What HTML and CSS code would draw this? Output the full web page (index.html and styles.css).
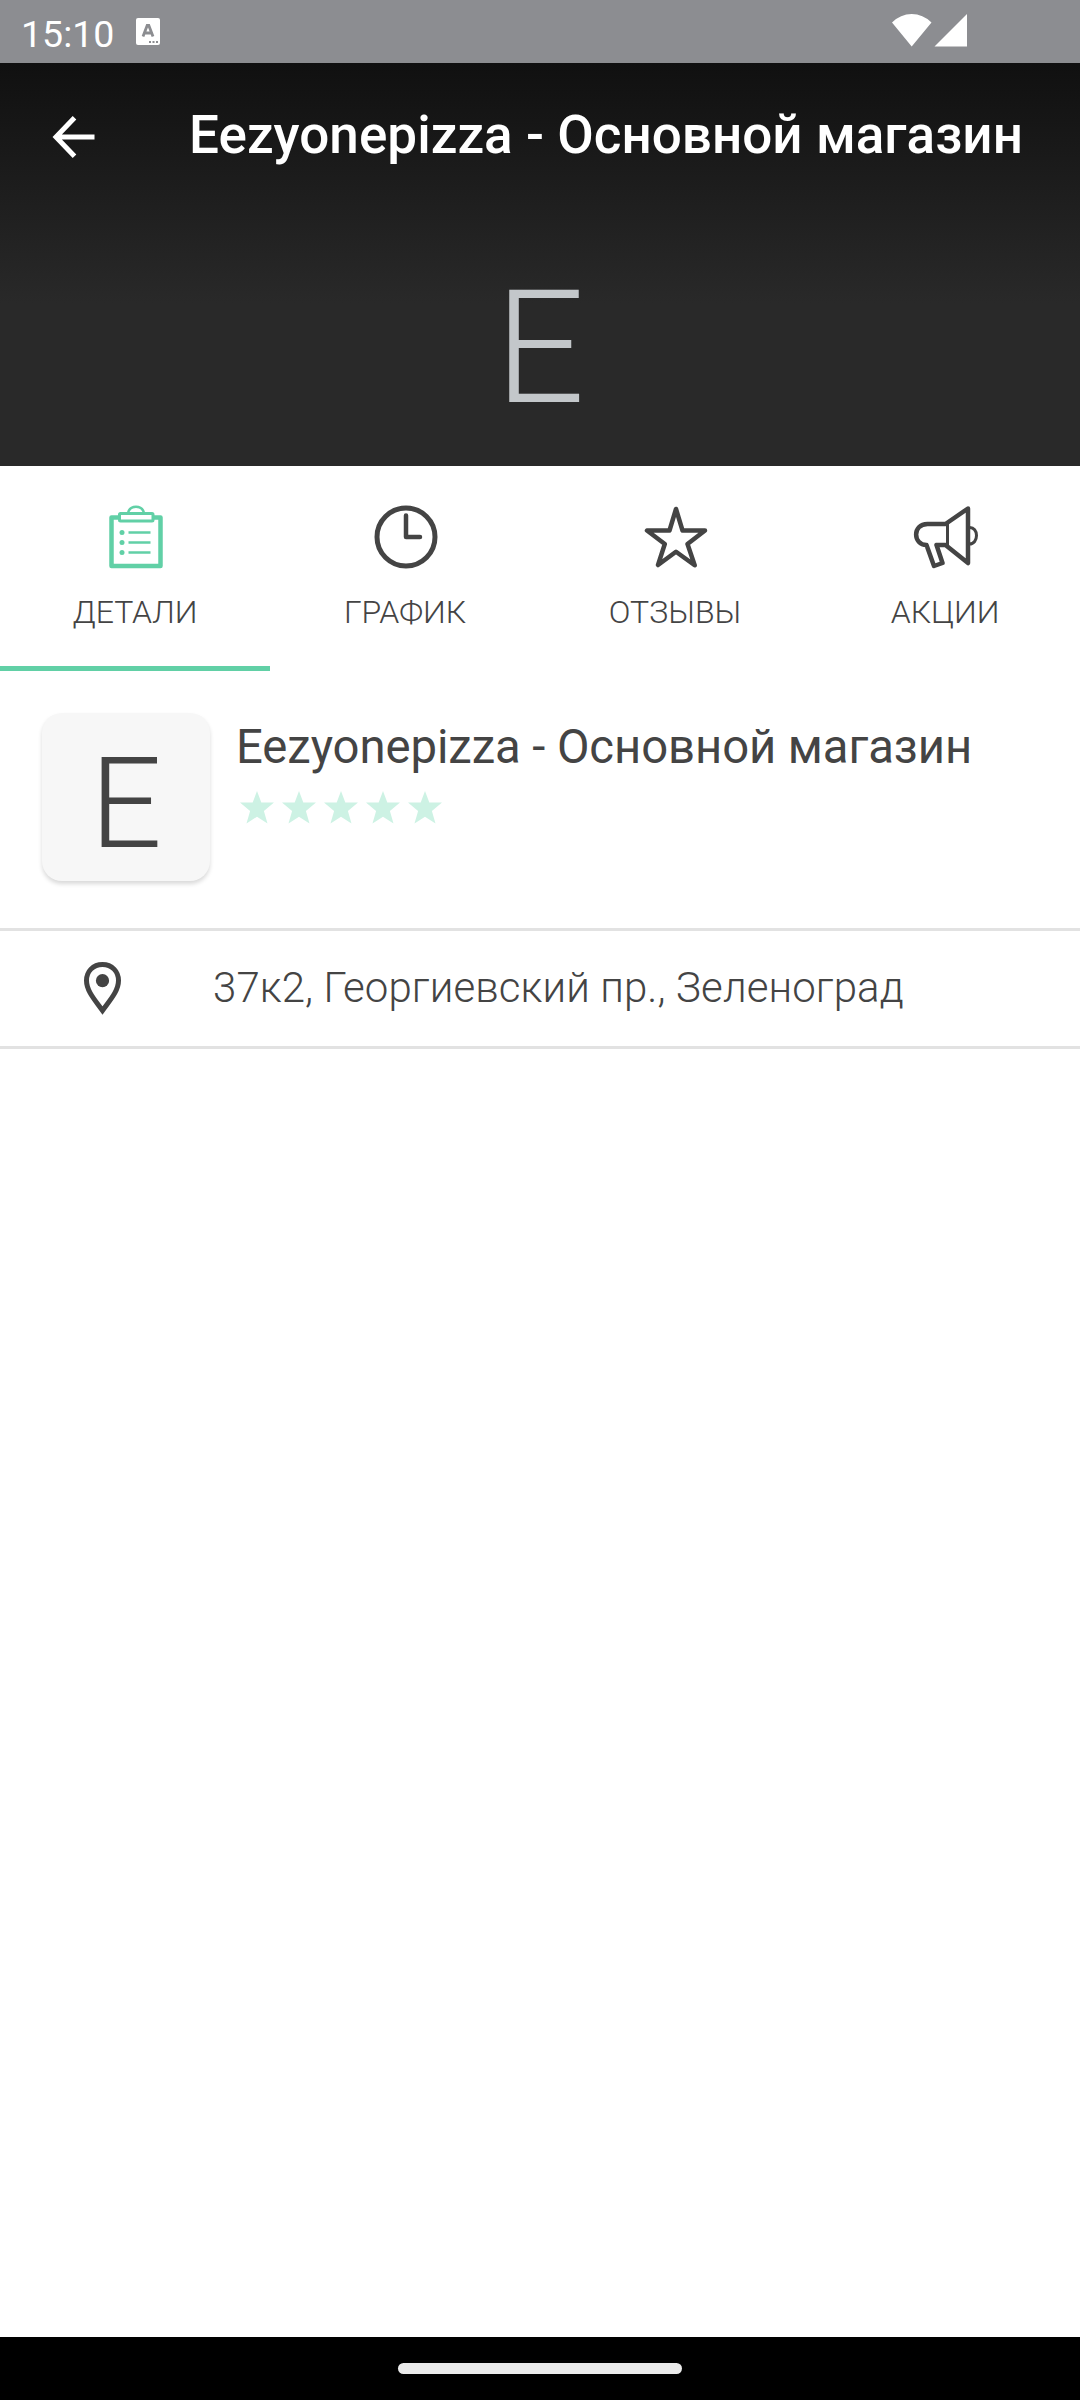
FILE: index.html
```html
<!DOCTYPE html>
<html lang="ru">
<head>
<meta charset="utf-8">
<title>Eezyonepizza - Основной магазин</title>
<link rel="stylesheet" href="styles.css">
</head>
<body>
<div class="screen">
  <div class="status-bar">
    <span class="clock">15:10</span>
    <svg class="status-app" viewBox="0 0 24 27"><rect width="24" height="27" rx="2" fill="#fff"/><path d="M7 18.500L11.200 7.500h1.600L17 18.500M8.800 15h6.400" fill="none" stroke="#8c8d91" stroke-width="2.800"/><path d="M13 23h2v2h-2zM16.500 23h2v2h-2zM20 23h2v2h-2z" fill="#8c8d91"/></svg>
    <svg class="status-signal" viewBox="0 0 76 34"><path d="M0 9.500Q8.500 1 19.700 1T39.500 9.500L19.700 33.500zM42.500 33.500L75 1V33.500z" fill="#fff"/></svg>
  </div>
  <header class="hero">
    <div class="toolbar">
      <svg class="back" viewBox="0 0 42 42"><path d="M41.500 21H3M21.500 1.800L3 21L21.500 40.200" fill="none" stroke="#fff" stroke-width="5"/></svg>
      <h1 class="title">Eezyonepizza - Основной магазин</h1>
    </div>
    <div class="hero-letter">E</div>
  </header>
  <nav class="tabs">
    <div class="tab tab-active">
      <svg class="tab-icon" viewBox="0 0 64 64" fill="none" stroke="#61d0a6"><path d="M15 12.500H7.500V61H56.500V12.500H48" stroke-width="4.500" stroke-linejoin="round"/><rect x="15.500" y="8.500" width="33.500" height="7.500" rx="1" stroke-width="3"/><path d="M24 8C26 -.5 38 -.5 40 8" stroke-width="2.500"/><path d="M24.500 27.500H46.500M24.500 37.500H46.500M24.500 47.500H46.500" stroke-width="2.500"/><g fill="#61d0a6" stroke="none"><circle cx="18" cy="27.500" r="2.500"/><circle cx="18" cy="37.500" r="2.500"/><circle cx="18" cy="47.500" r="2.500"/></g></svg>
      <span class="tab-label">ДЕТАЛИ</span>
    </div>
    <div class="tab">
      <svg class="tab-icon" viewBox="0 0 64 64" fill="none" stroke="#444"><circle cx="32" cy="32" r="29" stroke-width="5"/><path d="M32 10.500V32H46" stroke-width="4.500" stroke-linecap="round" stroke-linejoin="round"/></svg>
      <span class="tab-label">ГРАФИК</span>
    </div>
    <div class="tab">
      <svg class="tab-icon" viewBox="0 0 64 64" fill="none" stroke="#444"><path d="M32 4L38.500 25.500H61L43.500 39L50.700 60.300L32 46.800L14 60L20.800 39L3 25.500H25.500Z" stroke-width="4.500" stroke-linejoin="round"/></svg>
      <span class="tab-label">ОТЗЫВЫ</span>
    </div>
    <div class="tab">
      <svg class="tab-icon" viewBox="0 0 64 64" fill="none" stroke="#444" stroke-linejoin="round"><path d="M54 3.500L31.500 19H13.500C-2 19 -1 40 12.500 40L20 61L28.500 58L22.500 40H31.500L54 58Z" stroke-width="4.500"/><path d="M33.500 19V41" stroke-width="3"/><path d="M55 22.500C65 21.500 65 39.500 55 39" stroke-width="3"/></svg>
      <span class="tab-label">АКЦИИ</span>
    </div>
  </nav>
  <main class="details">
    <section class="shop">
      <div class="logo">E</div>
      <div class="shop-info">
        <h2 class="shop-name">Eezyonepizza - Основной магазин</h2>
        <svg class="rating" viewBox="0 0 202 33" fill="#cdf2e4"><defs><path id="star" d="M17 0L21.300 11.500H34L23.900 20L27.500 32.500L17 25.700L6.500 32.500L10.100 20L0 11.500H12.700Z"/></defs><use href="#star"/><use href="#star" x="42"/><use href="#star" x="84"/><use href="#star" x="126"/><use href="#star" x="168"/></svg>
      </div>
    </section>
    <section class="address">
      <svg class="pin" viewBox="0 0 37 53"><path d="M18.500 2.500C9 2.500 2.500 9.500 2.500 18.500C2.500 29 11 38 18.500 48.500C26 38 34.500 29 34.500 18.500C34.500 9.500 28 2.500 18.500 2.500Z" fill="none" stroke="#444" stroke-width="5"/><circle cx="18.500" cy="18.700" r="6.600" fill="#444"/></svg>
      <span class="address-text">37к2, Георгиевский пр., Зеленоград</span>
    </section>
  </main>
  <footer class="nav-bar"><div class="handle"></div></footer>
</div>
</body>
</html>
```
FILE: styles.css
```css
* { box-sizing: border-box; }
body { margin: 0; font-family: Roboto, sans-serif; color: #444; background: #fff; }
h1, h2 { margin: 0; }
svg { display: block; flex: none; overflow: visible; }
.screen { width: 1080px; height: 2400px; display: flex; flex-direction: column; overflow: hidden; }

.status-bar { height: 63px; flex: none; display: flex; background: #8c8d91; color: #fff; }
.clock { width: 114px; padding-left: 21px; font-size: 37.5px; line-height: 44px; padding-top: 12px; flex: none; }
.status-app { width: 24px; height: 27px; margin: 18px 0 0 22px; }
.status-signal { width: 76px; height: 34px; margin: 13px 112px 0 auto; }

.hero { height: 403px; flex: none; background: linear-gradient(#101010 0, #292929 240px); }
.toolbar { height: 147px; display: flex; align-items: center; padding-left: 53px; }
.back { width: 42px; height: 42px; }
.title { margin-left: 94px; padding-bottom: 3px; font-size: 53px; line-height: 62px; font-weight: 500; letter-spacing: .04px; color: #fff; white-space: nowrap; }
.hero-letter { text-align: center; font-size: 158px; line-height: 186px; font-weight: 300; color: #c3c7ca; margin-top: 45px; }

.tabs { height: 205px; flex: none; display: grid; grid-template-columns: repeat(4, 1fr); }
.tab { display: flex; flex-direction: column; align-items: center; padding-top: 39px; border-bottom: 5px solid transparent; }
.tab-active { border-bottom-color: #61d0a6; }
.tab-icon { width: 64px; height: 64px; margin-left: 1px; }
.tab-label { margin-top: 24px; font-size: 32px; line-height: 38px; font-weight: 300; white-space: nowrap; }

.details { flex: 1; }
.shop { height: 257px; padding: 42px 0 0 42px; display: flex; }
.logo { width: 168px; height: 168px; border-radius: 20px; background: #f7f7f7; box-shadow: 0 3px 4px rgba(0, 0, 0, .15); text-align: center; font-size: 126px; line-height: 182px; font-weight: 300; }
.shop-info { padding: 6px 0 0 26px; }
.shop-name { font-size: 47.25px; line-height: 56px; font-weight: 400; letter-spacing: -.08px; white-space: nowrap; }
.rating { width: 202px; height: 33px; margin: 16px 0 0 4px; }
.address { height: 121px; border-top: 3px solid #e2e2e2; border-bottom: 3px solid #e2e2e2; display: flex; align-items: center; padding-left: 84px; }
.pin { width: 37px; height: 53px; }
.address-text { margin-left: 92px; padding-bottom: 2px; font-size: 42px; line-height: 50px; font-weight: 300; letter-spacing: .1px; white-space: nowrap; }

.nav-bar { height: 63px; flex: none; background: #000; padding-top: 26px; }
.handle { width: 284px; height: 11px; border-radius: 6px; background: #ebebeb; margin: 0 auto; }
```
